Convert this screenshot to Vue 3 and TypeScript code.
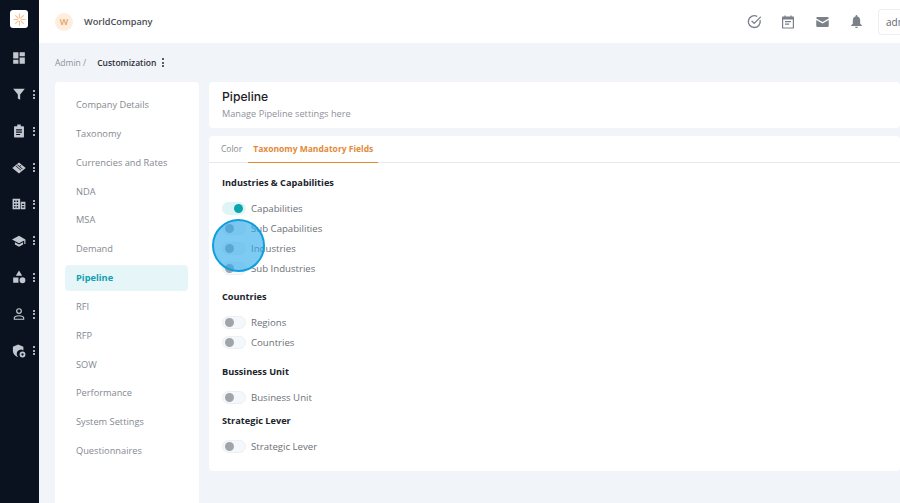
<script setup lang="ts">
const menu: string[] = ['Company Details','Taxonomy','Currencies and Rates','NDA','MSA','Demand','Pipeline','RFI','RFP','SOW','Performance','System Settings','Questionnaires']
const rail: { paths: string; dots: boolean }[] = [
  { paths: 'M2 2h9v11H2zM13 2h9v7h-9zM13 11h9v11h-9zM2 15h9v7H2z', dots: false },
  { paths: 'M2 3h20l-8 10v9l-4-2.500V13z', dots: true },
  { paths: 'M9 1h6v3h4.500a1 1 0 0 1 1 1v17a1 1 0 0 1-1 1h-15a1 1 0 0 1-1-1V5a1 1 0 0 1 1-1H9zM7 9v2h10V9zM7 13v2h10v-2zM7 17v2h7v-2z', dots: true },
  { paths: 'M12 2.500L23.500 12 12 21.500.5 12zM8.800 6.800l8.700 7.400.8-.9-8.700-7.400zM6.300 9l8.700 7.400.8-.9L7.100 8.100zM15.200 6.800l-2.400 2.100.8.900 2.400-2.100z', dots: true },
  { paths: 'M1 3h13v18H1zM15 8h8v13h-8zM3.500 6v2.500H6V6zM8 6v2.500h2.500V6zM3.500 11v2.500H6V11zM8 11v2.500h2.500V11zM3.500 16v2.500H6V16zM8 16v2.500h2.500V16zM17 11.500v2h4v-2zM17 16v2h4v-2z', dots: true },
  { paths: 'M12 3L0 9.500 12 16l9-5v6h2V9.500zM5 14v4l7 4 7-4v-4l-7 3.800z', dots: true },
  { paths: 'M12 1l5.500 9h-11zM2 13h9v9H2zM18 12.500a5 5 0 1 1 0 10 5 5 0 0 1 0-10z', dots: true },
  { paths: 'M12 2a5 5 0 1 1 0 10 5 5 0 0 1 0-10zm0 2a3 3 0 1 0 0 6 3 3 0 0 0 0-6zM12 14c5 0 9 2 9 4.500V22H3v-3.500C3 16 7 14 12 14zm0 2c-3.800 0-7 1.400-7 2.500V20h14v-1.500c0-1.100-3.200-2.500-7-2.500z', dots: true },
  { paths: 'M10.500 1l9 3.500V11A7 7 0 0 0 11 22.500C5.500 21 1.500 16.500 1.500 11V4.500zM18 13a5 5 0 1 1 0 10 5 5 0 0 1 0-10zm0 3a2 2 0 1 0 0 4 2 2 0 0 0 0-4z', dots: true },
]
interface Group { title: string; tight?: boolean; items: { label: string; on?: boolean }[] }
const groups: Group[] = [
  { title: 'Industries & Capabilities', items: [{ label: 'Capabilities', on: true }, { label: 'Sub Capabilities' }, { label: 'Industries' }, { label: 'Sub Industries' }] },
  { title: 'Countries', items: [{ label: 'Regions' }, { label: 'Countries' }] },
  { title: 'Bussiness Unit', items: [{ label: 'Business Unit' }] },
  { title: 'Strategic Lever', tight: true, items: [{ label: 'Strategic Lever' }] },
]
</script>

<template>
  <div class="app">
    <aside class="rail">
      <div class="logo">
        <svg width="13" height="13" viewBox="0 0 14 14" stroke="#f3c08f" stroke-width="1.200" stroke-linecap="round">
          <path d="M7 1v4M7 9v4M1 7h4M9 7h4M2.800 2.800l2.800 2.800M8.400 8.400l2.800 2.800M11.200 2.800L8.400 5.600M5.600 8.400l-2.800 2.800" />
        </svg>
      </div>
      <div class="rail-list">
        <div v-for="(r, i) in rail" :key="i" class="rail-item">
          <svg class="rail-icon" width="14" height="14" viewBox="0 0 24 24" fill="#c3c8d0" fill-rule="evenodd"><path :d="r.paths" /></svg>
          <span v-if="r.dots" class="dots light"><i /><i /><i /></span>
        </div>
      </div>
    </aside>
    <div class="page">
      <header class="top">
        <div class="brand">
          <span class="avatar">W</span>
          <span class="company">WorldCompany</span>
        </div>
        <div class="actions">
          <span class="ic"><svg width="15" height="15" viewBox="0 0 24 24" fill="none" stroke="#7b8089" stroke-width="2.200" stroke-linecap="round"><path d="M21 10.500A9.500 9.500 0 1 1 15.500 3.500" /><path d="M8 11.500l3.500 3.500L21.500 5" /></svg></span>
          <span class="ic"><svg width="12" height="14" viewBox="0 0 20 22" fill="#7b8089" fill-rule="evenodd"><path d="M4 0h2v2h8V0h2v2h3a1 1 0 0 1 1 1v18a1 1 0 0 1-1 1H1a1 1 0 0 1-1-1V3a1 1 0 0 1 1-1h3zM2 7v13h16V7zM5 9.500h10v2H5zM5 13.500h7v2H5z" /></svg></span>
          <span class="ic"><svg width="13" height="10" viewBox="0 0 20 16" fill="#7b8089"><path d="M0 2a2 2 0 0 1 2-2h16a2 2 0 0 1 2 2v.5L10 8 0 2.500zM0 4.800L10 10.300l10-5.500V14a2 2 0 0 1-2 2H2a2 2 0 0 1-2-2z" /></svg></span>
          <span class="ic"><svg width="11" height="13" viewBox="0 0 18 21" fill="#7b8089"><path d="M9 0a1.500 1.500 0 0 1 1.500 1.500v.8C13.500 3 15 5.500 15 8.500V14l3 3v1H0v-1l3-3V8.500C3 5.500 4.500 3 7.500 2.300v-.8A1.500 1.500 0 0 1 9 0zM6.800 19h4.400a2.200 2.200 0 0 1-4.400 0z" /></svg></span>
          <div class="user">admin</div>
        </div>
      </header>
      <div class="crumbs">
        <span class="crumb-muted">Admin /</span>
        <span class="crumb-current">Customization</span>
        <span class="dots dark"><i /><i /><i /></span>
      </div>
      <div class="content">
        <nav class="menu">
          <a v-for="m in menu" :key="m" class="menu-item" :class="{ active: m === 'Pipeline' }">{{ m }}</a>
        </nav>
        <main class="main">
          <section class="head-card">
            <h1>Pipeline</h1>
            <p>Manage Pipeline settings here</p>
          </section>
          <section class="tabs-card">
            <div class="tabs">
              <span class="tab">Color</span>
              <span class="tab current">Taxonomy Mandatory Fields</span>
            </div>
            <div class="fields">
              <div v-for="g in groups" :key="g.title" class="group" :class="{ tight: g.tight }">
                <h2>{{ g.title }}</h2>
                <div class="rows">
                  <label v-for="it in g.items" :key="it.label" class="row">
                    <span class="switch" :class="{ on: it.on }"><span class="knob" /></span>
                    <span class="row-label">{{ it.label }}</span>
                  </label>
                </div>
              </div>
            </div>
          </section>
        </main>
      </div>
    </div>
    <div class="pointer" />
  </div>
</template>

<style>
html, body { margin: 0; overflow: hidden; }
</style>

<style scoped>
.app { position: relative; display: flex; width: 900px; height: 503px; overflow: hidden; background: #f1f5f9; font-family: "Open Sans", sans-serif; }
.rail { flex: 0 0 39px; background: #0a111f; display: flex; flex-direction: column; align-items: flex-start; }
.logo { width: 18px; height: 18px; margin: 10px 0 0 10px; border-radius: 3px; background: #fff; display: flex; align-items: center; justify-content: center; }
.rail-list { margin-top: 11.500px; display: flex; flex-direction: column; }
.rail-item { position: relative; width: 39px; height: 36.600px; display: flex; align-items: center; }
.rail-icon { margin-left: 12px; }
.dots { display: inline-flex; flex-direction: column; gap: 1.500px; }
.dots i { display: block; width: 2px; height: 2px; border-radius: 50%; }
.dots.light { position: absolute; left: 33px; top: 14px; }
.dots.light i { background: #e4e6ea; }
.dots.dark i { background: #262b36; }
.page { flex: 1; min-width: 0; display: flex; flex-direction: column; }
.top { height: 43px; flex: none; background: #fff; display: flex; align-items: center; justify-content: space-between; padding-left: 16px; }
.brand { display: flex; align-items: center; gap: 11px; }
.avatar { width: 18px; height: 18px; border-radius: 50%; background: #fdeee0; color: #e8a25e; font-size: 9px; font-weight: 600; display: flex; align-items: center; justify-content: center; }
.company { font-size: 9.200px; font-weight: 600; color: #4a4d55; }
.actions { display: flex; align-items: center; }
.ic { width: 34px; display: flex; justify-content: center; align-items: center; }
.user { width: 22px; height: 26px; box-sizing: border-box; overflow: hidden; white-space: nowrap; border: 1px solid #eceef1; border-right: 0; border-radius: 4px 0 0 4px; padding-left: 7px; font-size: 10px; line-height: 24px; color: #5f636b; margin-left: 5px; }
.crumbs { height: 39px; flex: none; display: flex; align-items: center; padding-left: 16px; font-size: 8.500px; }
.crumb-muted { color: #8d929a; }
.crumb-current { margin-left: 11px; color: #2b2f38; font-weight: 600; }
.crumbs .dots { margin-left: 6px; }
.content { flex: 1; min-height: 0; display: flex; padding-left: 16px; gap: 10px; }
.menu { width: 144px; flex: none; box-sizing: border-box; background: #fff; border-radius: 4px 4px 0 0; padding: 10px 10px 0; display: flex; flex-direction: column; }
.menu-item { height: 26px; margin-bottom: 2.850px; padding-left: 11px; border-radius: 4px; font-size: 9.250px; line-height: 26px; color: #85898f; }
.menu-item.active { width: 123px; box-sizing: border-box; background: #e6f6f8; color: #12a0ae; font-weight: 700; }
.main { flex: 1; min-width: 0; display: flex; flex-direction: column; gap: 8px; }
.head-card { height: 46px; box-sizing: border-box; background: #fff; border-radius: 4px; padding: 7px 13px; }
.head-card h1 { margin: 0; font-family: Inter, sans-serif; font-size: 12.200px; line-height: 16px; font-weight: 500; color: #1e2129; }
.head-card p { margin: 2px 0 0; font-size: 9.200px; line-height: 14px; color: #8f939a; }
.tabs-card { height: 335px; background: #fff; border-radius: 4px; }
.tabs { height: 27px; box-sizing: border-box; border-bottom: 1px solid #e5e8ec; display: flex; padding-left: 7px; }
.tab { height: 27px; box-sizing: border-box; padding: 0 5px; font-size: 8.500px; line-height: 26px; color: #85898f; }
.tab.current { margin-left: 1px; padding: 0 5px; font-weight: 700; color: #e38a37; border-bottom: 1.500px solid #e38a37; }
.fields { padding: 13px 13px 0; display: flex; flex-direction: column; }
.group { margin-bottom: 16px; }
.group:first-child { margin-bottom: 15.400px; }
.group.tight { margin-top: -6px; }
.group h2 { margin: 0; font-size: 9.200px; line-height: 14px; font-weight: 700; color: #20242c; }
.rows { margin-top: 11px; display: flex; flex-direction: column; gap: 5.800px; }
.group:first-child .rows { gap: 6px; }
.row { height: 14px; display: flex; align-items: center; gap: 5px; }
.switch { width: 24px; height: 13px; box-sizing: border-box; border-radius: 7px; border: 1px solid #eceff3; background: #f5f8fa; display: flex; align-items: center; padding-left: 2px; }
.knob { width: 9px; height: 9px; border-radius: 50%; background: #a0a5ab; }
.switch.on { background: #dff4f6; border-color: #dff4f6; justify-content: flex-end; padding: 0 2px 0 0; }
.switch.on .knob { background: #0aa5ae; }
.row-label { font-size: 9.650px; color: #6c7077; }
.pointer { position: absolute; left: 211.500px; top: 219px; width: 53px; height: 53px; box-sizing: border-box; border-radius: 50%; border: 2px solid #109fdc; background: rgba(45, 170, 235, 0.62); }
</style>
